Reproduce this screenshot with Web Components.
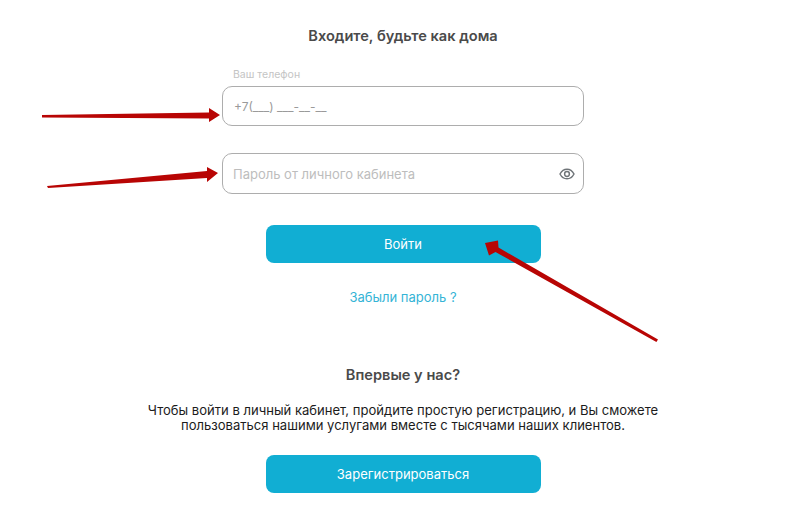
<!DOCTYPE html>
<html lang="ru">
<head>
<meta charset="utf-8">
<title>Вход</title>
<style>
  html, body { margin: 0; background: #fff; }
  body { font-family: Inter, "Noto Sans", sans-serif; }
</style>
</head>
<body>
<login-page>
  <section-title slot="login-title">Входите, будьте как дома</section-title>
  <form-field slot="phone" label="Ваш телефон" value-color="#9a9a9a" value-size="12px" value-pad="1px 0 0 1px">+7(___) ___-__-__</form-field>
  <form-field slot="password" eye box-height="41px">Пароль от личного кабинета</form-field>
  <primary-button slot="login">Войти</primary-button>
  <span slot="forgot">Забыли пароль ?</span>
  <section-title slot="new-title">Впервые у нас?</section-title>
  <span slot="intro">Чтобы войти в личный кабинет, пройдите простую регистрацию, и Вы сможете<br>пользоваться нашими услугами вместе с тысячами наших клиентов.</span>
  <primary-button slot="register">Зарегистрироваться</primary-button>
</login-page>
<arrow-marks></arrow-marks>

<script>
class SectionTitle extends HTMLElement {
  connectedCallback() {
    this.attachShadow({ mode: 'open' });
    this.shadowRoot.innerHTML = `
      <style>
        :host {
          display: block;
          color: #4a4a4a;
          font-size: 14.6px;
          font-weight: 600;
          line-height: 18px;
          text-align: center;
        }
      </style>
      <slot></slot>
    `;
  }
}
customElements.define('section-title', SectionTitle);

class FormField extends HTMLElement {
  connectedCallback() {
    const label = this.getAttribute('label');
    const color = this.getAttribute('value-color') || '#bdbdbd';
    const size = this.getAttribute('value-size') || '13px';
    const pad = this.getAttribute('value-pad') || '0';
    const height = this.getAttribute('box-height') || '40px';
    const eye = this.hasAttribute('eye') ? `
      <svg class="eye" width="16" height="16" viewBox="0 0 24 24" fill="none" stroke="#6f7478" stroke-width="2.2">
        <path d="M1.5 12C4 7.2 7.8 4.8 12 4.8s8 2.4 10.5 7.2c-2.5 4.8-6.3 7.2-10.5 7.2S4 16.8 1.5 12z"/>
        <circle cx="12" cy="12" r="3.6"/>
      </svg>` : '';
    this.attachShadow({ mode: 'open' });
    this.shadowRoot.innerHTML = `
      <style>
        :host { display: block; width: 362px; }
        .label {
          color: #c4c4c4;
          font-size: 10.5px;
          line-height: 12px;
          padding-left: 11px;
          margin-bottom: 5px;
        }
        .box {
          box-sizing: border-box;
          height: ${height};
          display: flex;
          align-items: center;
          justify-content: space-between;
          padding: 0 8px 0 10px;
          border: 1px solid #adadad;
          border-radius: 10px;
          background: #fff;
          color: ${color};
          font-size: ${size};
        }
        .value { padding: ${pad}; }
      </style>
      ${label ? `<div class="label">${label}</div>` : ''}
      <div class="box"><span class="value"><slot></slot></span>${eye}</div>
    `;
  }
}
customElements.define('form-field', FormField);

class PrimaryButton extends HTMLElement {
  connectedCallback() {
    this.attachShadow({ mode: 'open' });
    this.shadowRoot.innerHTML = `
      <style>
        :host {
          display: flex;
          align-items: center;
          justify-content: center;
          box-sizing: border-box;
          width: 275px;
          height: 38px;
          border-radius: 8px;
          background: #11aed3;
          color: #fff;
          font-size: 13px;
          font-weight: 400;
        }
      </style>
      <slot></slot>
    `;
  }
}
customElements.define('primary-button', PrimaryButton);

class LoginPage extends HTMLElement {
  connectedCallback() {
    this.attachShadow({ mode: 'open' });
    this.shadowRoot.innerHTML = `
      <style>
        :host {
          display: flex;
          flex-direction: column;
          align-items: center;
          box-sizing: border-box;
          width: 800px;
          height: 513px;
          padding: 27px 0 0 6px;
          font-family: Inter, "Noto Sans", sans-serif;
        }
        .phone { margin-top: 24px; }
        .password { margin-top: 27px; }
        .login { margin-top: 31px; }
        .forgot {
          margin-top: 26px;
          color: #35b4d6;
          font-size: 13px;
          line-height: 16px;
        }
        .new-title { margin-top: 61px; }
        .intro {
          margin-top: 19px;
          color: #1c1c1c;
          font-size: 13.05px;
          line-height: 15px;
          text-align: center;
        }
        .register { margin-top: 22px; }
      </style>
      <slot name="login-title"></slot>
      <div class="phone"><slot name="phone"></slot></div>
      <div class="password"><slot name="password"></slot></div>
      <div class="login"><slot name="login"></slot></div>
      <div class="forgot"><slot name="forgot"></slot></div>
      <div class="new-title"><slot name="new-title"></slot></div>
      <div class="intro"><slot name="intro"></slot></div>
      <div class="register"><slot name="register"></slot></div>
    `;
  }
}
customElements.define('login-page', LoginPage);

// red annotation arrows lying over the form
class ArrowMarks extends HTMLElement {
  connectedCallback() {
    this.attachShadow({ mode: 'open' });
    this.shadowRoot.innerHTML = `
      <style>
        :host { position: absolute; left: 0; top: 0; width: 800px; height: 513px; pointer-events: none; }
        svg { display: block; }
      </style>
      <svg width="800" height="513" viewBox="0 0 800 513" fill="#b80504">
        <polygon points="42,115 209,112.5 209,108 220,115 209,122 209,118.5 42,117.5"/>
        <polygon points="47,186 207,171 207,167 218,173 207,182 207,178 48,188"/>
        <polygon points="658,339.6 498.5,247.5 498,240.5 485,243 489,255.5 495.5,252 656.4,342"/>
      </svg>
    `;
  }
}
customElements.define('arrow-marks', ArrowMarks);
</script>
</body>
</html>
